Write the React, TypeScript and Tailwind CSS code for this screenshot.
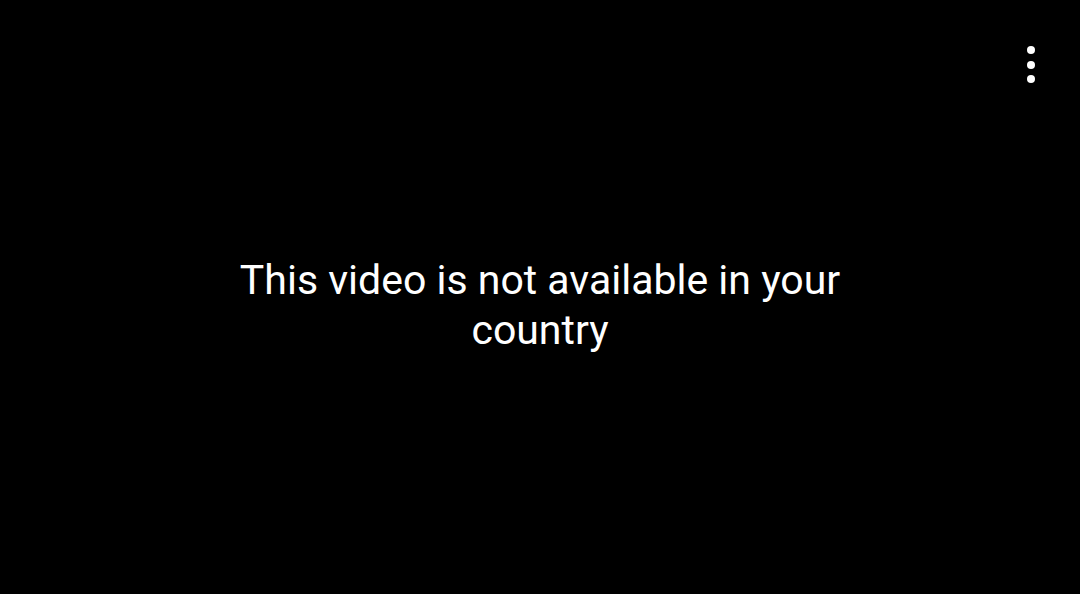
import React from 'react'

export default function App() {
  return (
    <div className="relative flex h-[594px] w-[1080px] items-center justify-center bg-black pt-4 font-['Roboto',sans-serif] text-white">
      <p className="w-[640px] text-center text-[41px] leading-[50px]">
        This video is not available in your country
      </p>
      <button className="absolute right-[45px] top-[46px] flex flex-col items-center gap-[6.5px]" aria-label="More options">
        <span className="h-2 w-2 rounded-full bg-white" />
        <span className="h-2 w-2 rounded-full bg-white" />
        <span className="h-2 w-2 rounded-full bg-white" />
      </button>
    </div>
  )
}
